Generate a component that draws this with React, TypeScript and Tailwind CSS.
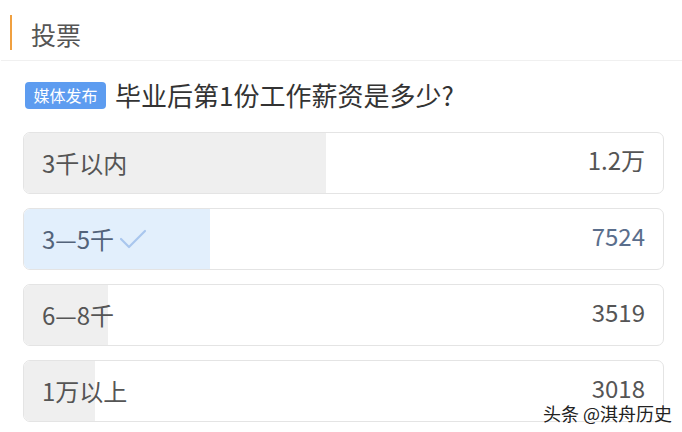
import React from 'react'

const options = [
  { label: '3千以内', count: '1.2万', fill: 302, selected: false },
  { label: '3—5千', count: '7524', fill: 186, selected: true },
  { label: '6—8千', count: '3519', fill: 84, selected: false },
  { label: '1万以上', count: '3018', fill: 71, selected: false },
]

const font = { fontFamily: '"Noto Sans CJK SC", "Noto Sans", sans-serif' }

function Check() {
  return (
    <svg width="30" height="24" viewBox="0 0 30 24" className="ml-1">
      <path d="M3 12 L11 20 L27 4" fill="none" stroke="#a9c6ee" strokeWidth="2.2" strokeLinecap="round" strokeLinejoin="round" />
    </svg>
  )
}

export default function App() {
  return (
    <div className="relative w-[682px] h-[432px] bg-white overflow-hidden" style={font}>
      {/* Header */}
      <div className="flex items-center h-[61px] pl-[9px] ml-[1px] border-b border-[#f0f0f0]">
        <div className="w-[2px] h-[35px] bg-[#f0a040] mt-[4px]" />
        <span className="ml-[19px] text-[25px] leading-none text-[#555] mt-[8px]">投票</span>
      </div>

      {/* Question */}
      <div className="flex items-center mt-[20px] pl-[25px] h-[28px]">
        <span className="flex items-center justify-center h-[27px] w-[81px] rounded-[4px] bg-[#5d9cf0] text-white text-[16px] leading-none">
          媒体发布
        </span>
        <span className="ml-[9px] text-[26px] leading-none text-[#333]">毕业后第1份工作薪资是多少?</span>
      </div>

      {/* Options */}
      <div className="flex flex-col gap-[14px] mt-[23px] ml-[23px] w-[641px]">
        {options.map((o) => (
          <div
            key={o.label}
            className="relative flex items-center justify-between h-[62px] rounded-[7px] border border-[#e4e4e4] overflow-hidden px-[18px]"
          >
            <div
              className={`absolute left-0 top-0 bottom-0 ${o.selected ? 'bg-[#e2effc]' : 'bg-[#efefef]'}`}
              style={{ width: o.fill }}
            />
            <div className={`relative flex items-center text-[24px] leading-none ${o.selected ? 'text-[#53637a]' : 'text-[#555]'}`}>
              {o.label}
              {o.selected && <Check />}
            </div>
            <div className={`relative text-[24px] leading-none mb-[7px] ${o.selected ? 'text-[#5a6e8c]' : 'text-[#555]'}`}>
              {o.count}
            </div>
          </div>
        ))}
      </div>

      {/* Watermark */}
      <div
        className="absolute right-[10px] bottom-[10px] text-[18px] leading-none text-[#222]"
        style={{ textShadow: '0 0 2px #fff, 0 0 2px #fff' }}
      >
        头条 @淇舟历史
      </div>
    </div>
  )
}
